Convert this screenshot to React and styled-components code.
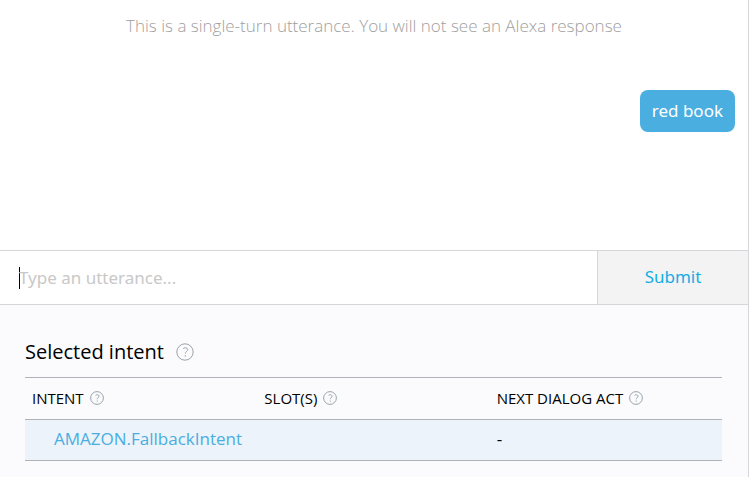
import React, { useState } from 'react'
import styled, { createGlobalStyle } from 'styled-components'

const GlobalStyle = createGlobalStyle`
    *, *::before, *::after {
        box-sizing: border-box;
    }

    body {
        margin: 0;
        background: #fff;
        color: #000;
        font-family: "Open Sans", "Noto Sans", sans-serif;
    }
`

const Simulator = styled.main`
    display: flex;
    flex-direction: column;
    min-height: 100vh;
    border-right: 1px solid #d5d6d9;
`

const Conversation = styled.section`
    display: flex;
    flex-direction: column;
    gap: 50px;
    min-height: 250px;
    padding: 12px 13px;
`

const Notice = styled.p`
    margin: 0;
    color: #a0a0a0;
    font-size: 17px;
    font-weight: 300;
    line-height: 28px;
    text-align: center;
`

const Bubble = styled.p`
    align-self: flex-end;
    margin: 0;
    padding: 8px 12px;
    border-radius: 8px;
    background: #4aaee0;
    color: #fff;
    font-family: "Noto Sans", sans-serif;
    font-size: 17px;
    line-height: 26px;
`

const UtteranceForm = styled.form`
    display: flex;
    height: 55px;
    border-top: 1px solid #d5d6d9;
    border-bottom: 1px solid #d5d6d9;
`

const Field = styled.div`
    display: flex;
    flex: 1;
    align-items: center;
    padding-left: 19px;
`

const Caret = styled.span`
    width: 1px;
    height: 22px;
    margin-right: -1px;
    background: #000;
`

const UtteranceInput = styled.input`
    flex: 1;
    min-width: 0;
    padding: 0;
    border: 0;
    outline: 0;
    background: transparent;
    color: #000;
    caret-color: transparent;
    font-family: "Noto Sans", sans-serif;
    font-size: 17px;
    line-height: 24px;

    &::placeholder {
        color: #c8c8c8;
        opacity: 1;
    }
`

const SubmitButton = styled.button`
    width: 151px;
    padding: 0 0 2px;
    border: 0;
    border-left: 1px solid #d5d6d9;
    background: #f3f3f3;
    color: #13ade4;
    font-family: "Noto Sans", sans-serif;
    font-size: 17px;
    cursor: pointer;
`

const Results = styled.section`
    flex: 1;
    padding: 33px 26px 16px 25px;
    background: #fbfbfd;
`

const Title = styled.h2`
    display: flex;
    align-items: center;
    gap: 12px;
    margin: 0 0 11px;
    font-size: 20px;
    font-weight: 400;
    line-height: 28px;
`

const IntentTable = styled.table`
    width: 100%;
    border-collapse: collapse;
    border-top: 1px solid #b0b4ba;
    table-layout: fixed;
`

const HeaderCell = styled.th`
    height: 42px;
    padding: 0 7px 2px;
    border-bottom: 1px solid #b0b4ba;
    font-size: 15px;
    font-weight: 400;
    line-height: 20px;
    text-align: left;
    white-space: nowrap;
`

const HeaderLabel = styled.span`
    display: flex;
    align-items: center;
    gap: 6px;
`

const Cell = styled.td`
    height: 41px;
    padding: 0 7px 2px;
    border-bottom: 1px solid #b0b4ba;
    background: #ecf3fb;
    font-size: 17px;
    line-height: 24px;
`

const IntentLink = styled.a`
    margin-left: 22px;
    color: #4aaee0;
    text-decoration: none;
`

const Icon = styled.svg`
    flex: none;
    width: ${({ $size }) => $size}px;
    height: ${({ $size }) => $size}px;
    fill: none;
    stroke: #98a3aa;
`

const HelpIcon = ({ size = 14 }) => (
    <Icon $size={ size } viewBox="0 0 18 18" strokeWidth={ 18 / size } aria-hidden="true">
        <circle cx="9" cy="9" r="8.2" />
        <path d="M7.2 5.6c.6-.5 1.3-.8 2.1-.8 1.4 0 2.3.7 2.3 1.9 0 1.8-2.3 1.9-2.3 3.9" />
        <path d="M9.3 12.2v1.5" />
    </Icon>
)

const columns = ['INTENT', 'SLOT(S)', 'NEXT DIALOG ACT']

const App = () => {
    const [utterance, setUtterance] = useState('')

    return (
        <Simulator>
            <GlobalStyle />
            <Conversation>
                <Notice>This is a single-turn utterance. You will not see an Alexa response</Notice>
                <Bubble>red book</Bubble>
            </Conversation>
            <UtteranceForm onSubmit={ e => e.preventDefault() }>
                <Field>
                    { !utterance && <Caret /> }
                    <UtteranceInput
                        aria-label="Utterance"
                        placeholder="Type an utterance..."
                        value={ utterance }
                        onChange={ e => setUtterance(e.target.value) }
                    />
                </Field>
                <SubmitButton type="submit">Submit</SubmitButton>
            </UtteranceForm>
            <Results>
                <Title>
                    Selected intent
                    <HelpIcon size={ 18 } />
                </Title>
                <IntentTable>
                    <thead>
                        <tr>
                            { columns.map(name => (
                                <HeaderCell key={ name } scope="col">
                                    <HeaderLabel>
                                        { name }
                                        <HelpIcon />
                                    </HeaderLabel>
                                </HeaderCell>
                            )) }
                        </tr>
                    </thead>
                    <tbody>
                        <tr>
                            <Cell><IntentLink href="#fallback">AMAZON.FallbackIntent</IntentLink></Cell>
                            <Cell />
                            <Cell>-</Cell>
                        </tr>
                    </tbody>
                </IntentTable>
            </Results>
        </Simulator>
    )
}

export default App
